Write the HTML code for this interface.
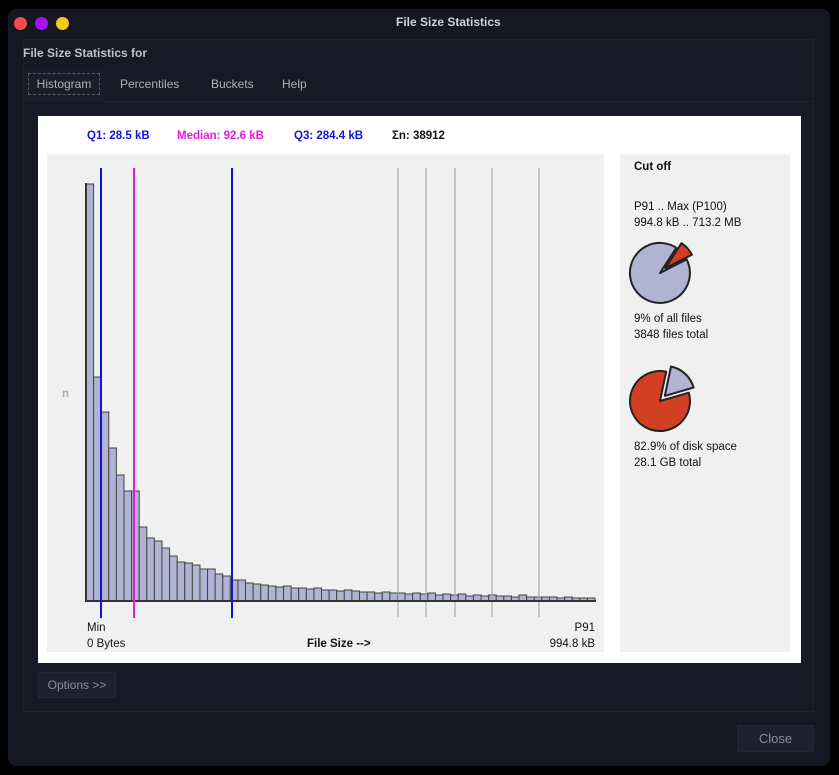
<!DOCTYPE html>
<html><head><meta charset="utf-8"><style>
body{margin:0;width:839px;height:775px;background:#000;font-family:"Liberation Sans",sans-serif;position:relative;overflow:hidden}
.win{position:absolute;left:8px;top:9px;width:822px;height:757px;background:#151823;border-radius:8px}
.dot{position:absolute;top:17px;width:13px;height:13px;border-radius:50%}
.t{position:absolute;color:#c8cad2;font-size:12px}
.panel{position:absolute;left:23px;top:39px;width:791px;height:673px;background:#171a26;border:1px solid #20232f;box-sizing:border-box}
.btn{position:absolute;background:#1d2130;border:1px solid #232738;color:#8a8e9c;font-size:12px;text-align:center;box-sizing:border-box}
svg text{font-family:"Liberation Sans",sans-serif;font-size:11.5px}
</style></head><body>
<div class="win"></div>
<div class="dot" style="left:14px;background:#f24b4b"></div>
<div class="dot" style="left:35px;background:#a70ff0"></div>
<div class="dot" style="left:56px;background:#f5c916"></div>
<div class="t" style="left:396px;top:15px;font-weight:bold;color:#d0d2da">File Size Statistics</div>
<div class="panel"></div>
<div class="t" style="left:23px;top:46px;font-weight:bold;color:#bfc1c9">File Size Statistics for</div>
<div style="position:absolute;left:24px;top:69px;width:80px;height:33px;background:#1a1d2a"></div>
<div style="position:absolute;left:104px;top:101px;width:709px;height:1px;background:#20232f"></div>
<div class="t" style="left:28px;top:73px;width:72px;height:22px;border:1px dashed #555a68;box-sizing:border-box;line-height:20px;text-align:center;color:#aeb1bb">Histogram</div>
<div class="t" style="left:120px;top:77px;color:#aeb1bb">Percentiles</div>
<div class="t" style="left:211px;top:77px;color:#aeb1bb">Buckets</div>
<div class="t" style="left:282px;top:77px;color:#aeb1bb">Help</div>
<svg style="position:absolute;left:0;top:0" width="839" height="775" id="s">
<rect x="38" y="116" width="763" height="547" fill="#fff"/>
<rect x="47" y="154" width="557" height="498" fill="#f0f0f0"/>
<rect x="620" y="154" width="170" height="498" fill="#f0f0f0"/>
<g font-weight="bold"><text x="87" y="139" fill="#1414d8">Q1: 28.5 kB</text>
<text x="177" y="139" fill="#e619e6">Median: 92.6 kB</text>
<text x="294" y="139" fill="#1414d8">Q3: 284.4 kB</text>
<text x="392" y="139" fill="#111">Σn: 38912</text></g>
<text x="62" y="397" fill="#aaa" font-weight="bold">n</text>
<g id="bars" fill="#b1b3d2" stroke="#444" stroke-width="1"></g>
<g stroke="#aaa" stroke-width="1.2"><line x1="398" y1="168" x2="398" y2="617"/><line x1="426" y1="168" x2="426" y2="617"/><line x1="455" y1="168" x2="455" y2="617"/><line x1="492" y1="168" x2="492" y2="617"/><line x1="539" y1="168" x2="539" y2="617"/></g>
<line x1="86" y1="183" x2="86" y2="602" stroke="#333" stroke-width="2"/>
<line x1="86" y1="601" x2="596" y2="601" stroke="#333" stroke-width="2"/>
<g stroke-width="2"><line x1="101" y1="168" x2="101" y2="618" stroke="#1414d8"/><line x1="134" y1="168" x2="134" y2="618" stroke="#e619e6"/><line x1="232" y1="168" x2="232" y2="618" stroke="#1414d8"/></g>
<text x="87" y="631" fill="#111">Min</text><text x="87" y="647" fill="#111">0 Bytes</text>
<text x="307" y="647" fill="#111" font-weight="bold">File Size  --&gt;</text>
<text x="595" y="631" fill="#111" text-anchor="end">P91</text><text x="595" y="647" fill="#111" text-anchor="end">994.8 kB</text>
<g font-size="11">
<text x="634" y="170" fill="#111" font-weight="bold">Cut off</text>
<text x="634" y="210" fill="#111">P91 .. Max (P100)</text>
<text x="634" y="226" fill="#111">994.8 kB .. 713.2 MB</text>
<text x="634" y="322" fill="#111">9% of all files</text>
<text x="634" y="338" fill="#111">3848 files total</text>
<text x="634" y="450" fill="#111">82.9% of disk space</text>
<text x="634" y="466" fill="#111">28.1 GB total</text></g>
<g stroke="#222" stroke-width="2" stroke-linejoin="round">
<path id="p1a" fill="#b1b3d2"/><path id="p1b" fill="#d23f22"/>
<path id="p2a" fill="#d23f22"/><path id="p2b" fill="#b1b3d2"/>
</g>
</svg>
<div class="btn" style="left:38px;top:672px;width:78px;height:26px;line-height:24px">Options &gt;&gt;</div>
<div class="btn" style="left:737px;top:725px;width:77px;height:27px;line-height:25px;font-size:13px">Close</div>
<script>
var tops=[184,377,412,448,475,491,491,527,538,541,548,556,562,563,565,569,569,574,576,580,580,583,584,585,586,587,586,588,588,589,588,590,590,591,590,591,592,592,593,592,593,593,594,593,594,593,595,594,595,594,596,595,596,595,596,596,597,595,597,597,597,597,598,597,598,598,598];
var g=document.getElementById('bars'),w=509/tops.length,h='';
for(var i=0;i<tops.length;i++){h+='<rect x="'+(86+i*w).toFixed(2)+'" y="'+tops[i]+'" width="'+w.toFixed(2)+'" height="'+(601-tops[i])+'"/>';}
g.innerHTML=h;
function arc(cx,cy,r,a0,a1,off){var am=(a0+a1)/2*Math.PI/180;cx+=off*Math.sin(am);cy-=off*Math.cos(am);
function p(a){a=a*Math.PI/180;return (cx+r*Math.sin(a)).toFixed(1)+' '+(cy-r*Math.cos(a)).toFixed(1)}
return 'M'+cx.toFixed(1)+' '+cy.toFixed(1)+' L'+p(a0)+' A'+r+' '+r+' 0 '+((a1-a0)>180?1:0)+' 1 '+p(a1)+'Z';}
document.getElementById('p1a').setAttribute('d',arc(660,273,30,63,393,0));
document.getElementById('p1b').setAttribute('d',arc(660,273,30,33,63,7));
document.getElementById('p2a').setAttribute('d',arc(660,401,30,74,372,0));
document.getElementById('p2b').setAttribute('d',arc(660,401,30,12,74,7));
</script>
</body></html>
